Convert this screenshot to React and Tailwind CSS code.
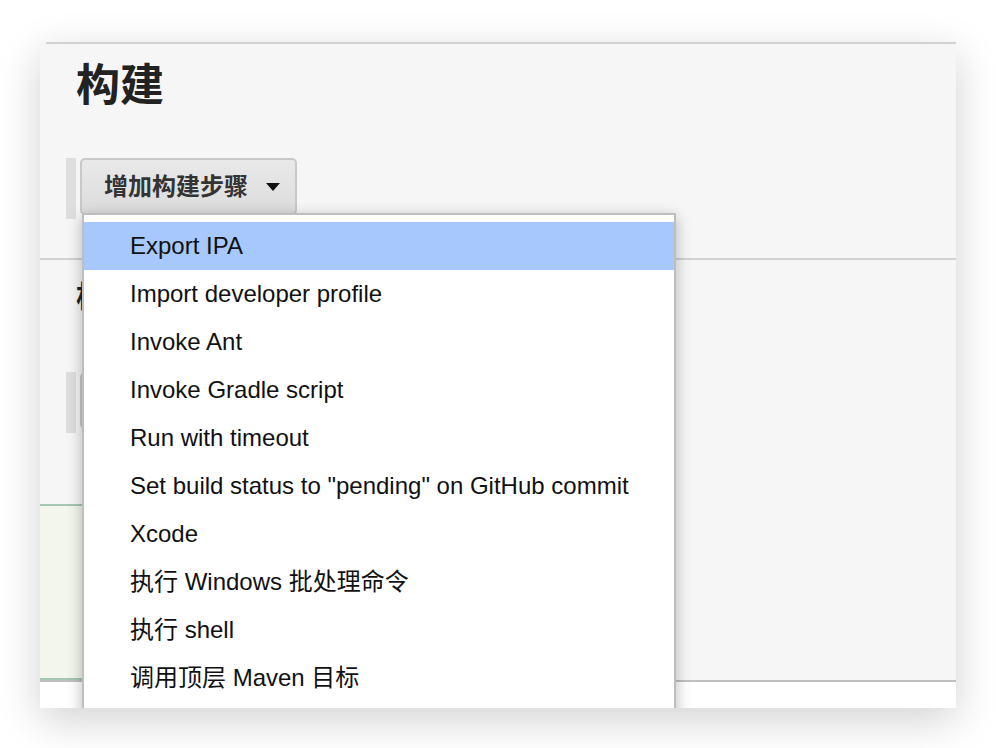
import React from 'react';

const items = [
    'Export IPA',
    'Import developer profile',
    'Invoke Ant',
    'Invoke Gradle script',
    'Run with timeout',
    'Set build status to "pending" on GitHub commit',
    'Xcode',
    '执行 Windows 批处理命令',
    '执行 shell',
    '调用顶层 Maven 目标',
];

const font = { fontFamily: '"Liberation Sans", "Noto Sans CJK SC", sans-serif' };

const Caret = () => (
    <svg width="14" height="8" viewBox="0 0 14 8" className="ml-[18px]">
        <path d="M0 0 L14 0 L7 8 Z" fill="#111" />
    </svg>
);

const StepButton = ({ label }) => (
    <div className="flex items-start">
        <div className="w-[10px] h-[61px] bg-[#dedede]" />
        <button
            className="ml-[4px] h-[57px] w-[217px] rounded-[5px] border-2 border-[#c8c8c8] bg-gradient-to-b from-[#e9e9e9] to-[#dcdcdc] flex items-center pl-[22px] text-[24px] font-semibold text-[#333]"
            style={font}
        >
            {label}
            <Caret />
        </button>
    </div>
);

export default function App() {
    return (
        <div className="w-[996px] h-[748px] bg-white pt-[42px] pl-[40px]" style={font}>
            <div className="relative w-[916px] h-[666px] overflow-hidden bg-[#f6f6f6] shadow-[0_12px_40px_rgba(0,0,0,0.18)]">
                <div className="h-[2px] ml-[6px] bg-[#d2d2d2]" />

                {/* 构建 */}
                <div className="h-[214px] pl-[26px]">
                    <h1 className="pt-[20px] pl-[10px] text-[44px] leading-[44px] font-bold text-[#222]">构建</h1>
                    <div className="mt-[50px]">
                        <StepButton label="增加构建步骤" />
                    </div>
                </div>
                <div className="h-[2px] bg-[#d2d2d2]" />

                {/* 构建后操作, mostly under the open menu */}
                <div className="h-[420px] flex flex-col">
                    <div className="pl-[26px]">
                        <h2 className="pt-[22px] pl-[10px] text-[30px] leading-[30px] font-bold text-[#222]">构建后操作</h2>
                        <div className="mt-[60px]">
                            <StepButton label="" />
                        </div>
                    </div>
                    <div className="mt-[71px] w-[560px] flex-1 border-t-2 border-b-2 border-[#a3c7b2] bg-[#f2f6ec]" />
                </div>
                <div className="h-[2px] bg-[#c0c0c0]" />
                <div className="h-[28px] bg-white" />

                {/* dropdown menu */}
                <div className="absolute left-[42px] top-[171px] w-[594px] h-[540px] bg-white border-2 border-[#bebebe] pt-[7px] shadow-[0_4px_14px_rgba(0,0,0,0.28)]">
                    {items.map((item, i) => (
                        <div
                            key={item}
                            className={
                                'h-[48px] flex items-center pl-[46px] text-[24px] text-[#111] whitespace-nowrap ' +
                                (i === 0 ? 'bg-[#a6c8fc]' : '')
                            }
                        >
                            {item}
                        </div>
                    ))}
                </div>
            </div>
        </div>
    );
}
